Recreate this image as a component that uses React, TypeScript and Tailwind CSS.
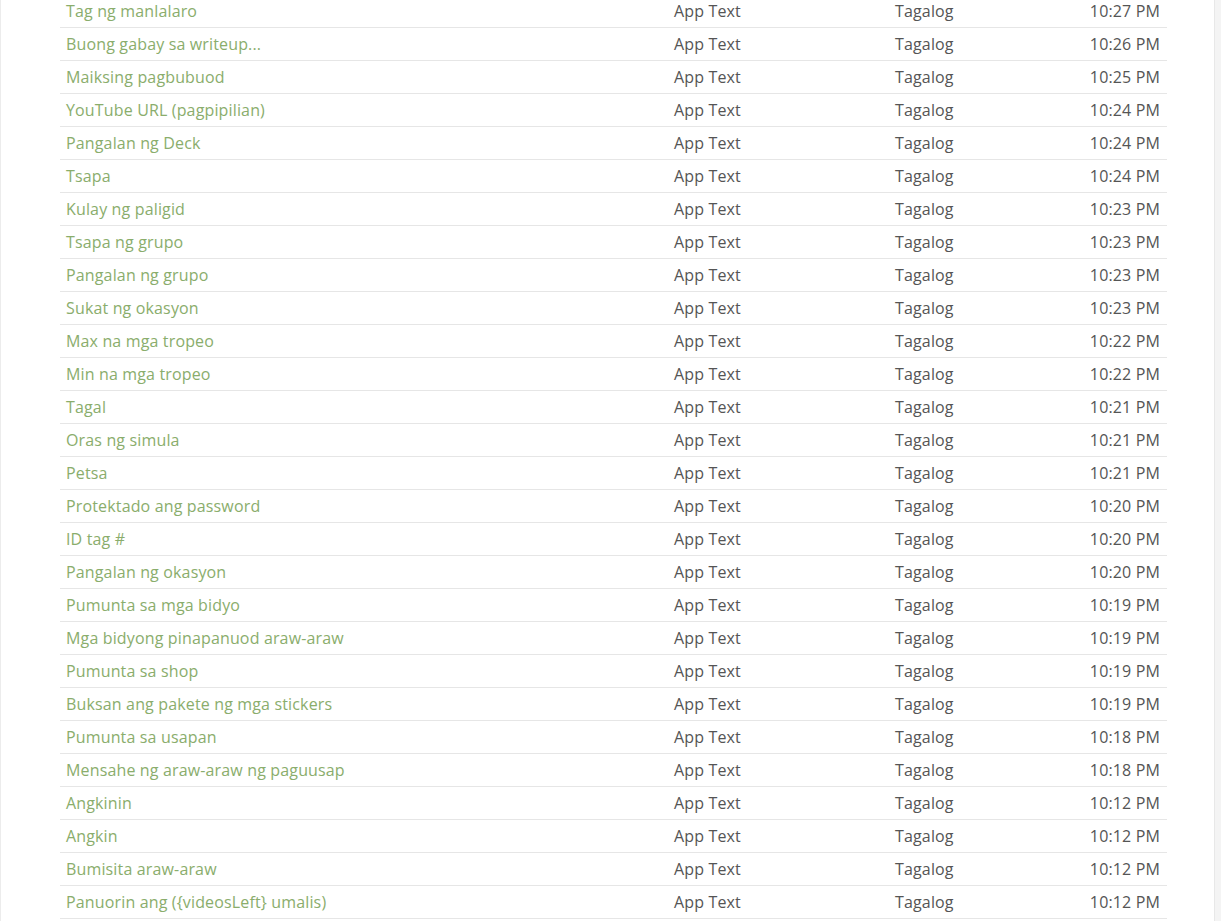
const rows: [string, string][] = [
  ["Tag ng manlalaro", "10:27 PM"],
  ["Buong gabay sa writeup...", "10:26 PM"],
  ["Maiksing pagbubuod", "10:25 PM"],
  ["YouTube URL (pagpipilian)", "10:24 PM"],
  ["Pangalan ng Deck", "10:24 PM"],
  ["Tsapa", "10:24 PM"],
  ["Kulay ng paligid", "10:23 PM"],
  ["Tsapa ng grupo", "10:23 PM"],
  ["Pangalan ng grupo", "10:23 PM"],
  ["Sukat ng okasyon", "10:23 PM"],
  ["Max na mga tropeo", "10:22 PM"],
  ["Min na mga tropeo", "10:22 PM"],
  ["Tagal", "10:21 PM"],
  ["Oras ng simula", "10:21 PM"],
  ["Petsa", "10:21 PM"],
  ["Protektado ang password", "10:20 PM"],
  ["ID tag #", "10:20 PM"],
  ["Pangalan ng okasyon", "10:20 PM"],
  ["Pumunta sa mga bidyo", "10:19 PM"],
  ["Mga bidyong pinapanuod araw-araw", "10:19 PM"],
  ["Pumunta sa shop", "10:19 PM"],
  ["Buksan ang pakete ng mga stickers", "10:19 PM"],
  ["Pumunta sa usapan", "10:18 PM"],
  ["Mensahe ng araw-araw ng paguusap", "10:18 PM"],
  ["Angkinin", "10:12 PM"],
  ["Angkin", "10:12 PM"],
  ["Bumisita araw-araw", "10:12 PM"],
  ["Panuorin ang ({videosLeft} umalis)", "10:12 PM"],
];

export default function App() {
  return (
    <div className="flex h-[921px] overflow-hidden bg-white font-['Open_Sans',sans-serif] text-[16px] tracking-[0.15px]">
      <div className="flex-1 border-l border-[#ececec]">
        <div className="ml-[59px] mt-[-5px] w-[1107px]">
          {rows.map(([name, time], i) => (
            <div key={i} className="flex h-[33px] items-center border-b border-[#e6e6e6]">
              <div className="w-[608px] pl-[6px] text-[#8aad6c] truncate">{name}</div>
              <div className="w-[221px] pl-[6px] text-[#555555]">App Text</div>
              <div className="flex-1 pl-[6px] text-[#555555]">Tagalog</div>
              <div className="pr-[7px] text-right text-[#555555]">{time}</div>
            </div>
          ))}
        </div>
      </div>
      <div className="w-[7px] border-l border-[#e8e8e8] bg-[#f4f4f4]" />
    </div>
  );
}
